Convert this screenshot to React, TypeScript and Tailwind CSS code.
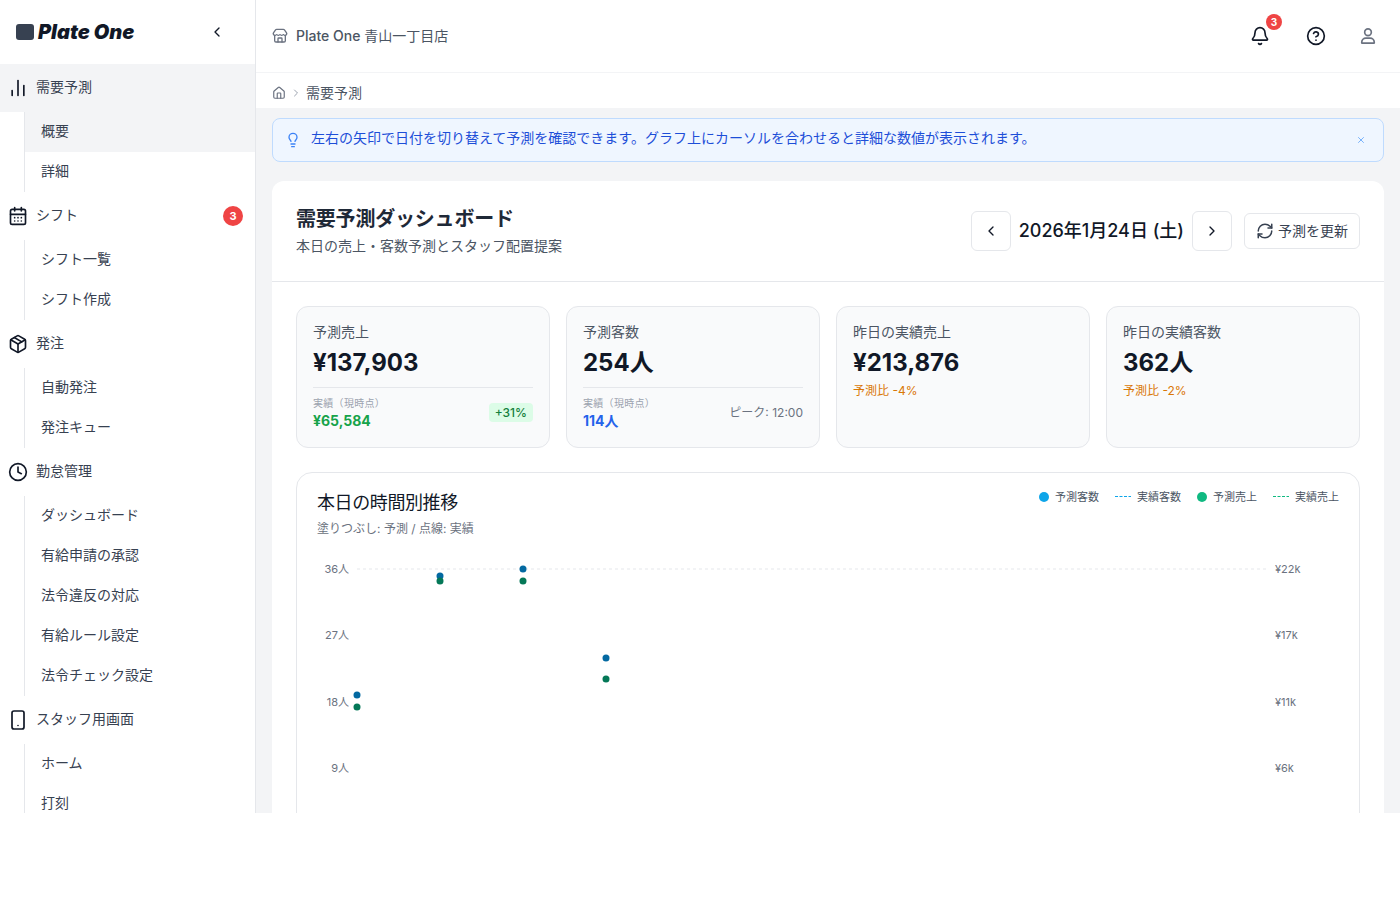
import {
  Bell,
  CalendarDays,
  ChartNoAxesColumn,
  ChevronLeft,
  ChevronRight,
  CircleHelp,
  Clock,
  House,
  Lightbulb,
  Package,
  RefreshCw,
  Store,
  X,
} from "lucide-react";

const font = "font-['Inter','Noto_Sans_CJK_JP',sans-serif]";

function NavHead({ icon, label, active, badge }: { icon: React.ReactNode; label: string; active?: boolean; badge?: string }) {
  return (
    <div className={`flex h-12 items-center pl-2 pr-3 ${active ? "bg-[#f3f4f6]" : ""}`}>
      <span className="flex w-5 shrink-0 justify-center text-[#111827]">{icon}</span>
      <span className="ml-2 flex-1 pb-0.5 text-sm text-[#374151]">{label}</span>
      {badge && (
        <span className="flex h-5 w-5 items-center justify-center rounded-full bg-[#ef4444] text-[11px] font-bold text-white">{badge}</span>
      )}
    </div>
  );
}

function NavSub({ items, active }: { items: string[]; active?: string }) {
  return (
    <div className="ml-6 border-l border-[#e5e7eb]">
      {items.map((item) => (
        <div key={item} className={`flex h-10 items-center pb-0.5 pl-4 text-sm text-[#374151] ${item === active ? "bg-[#f3f4f6]" : ""}`}>
          {item}
        </div>
      ))}
    </div>
  );
}

function TabletIcon() {
  return (
    <svg width="20" height="20" viewBox="0 0 20 20" fill="none" stroke="currentColor" strokeWidth="1.7">
      <rect x="4" y="1" width="12" height="18" rx="2" />
      <circle cx="10" cy="15.5" r="0.5" fill="currentColor" strokeWidth="0.6" />
    </svg>
  );
}

function UserIcon() {
  return (
    <svg width="20" height="20" viewBox="0 0 24 24" fill="none" stroke="currentColor" strokeWidth="2">
      <circle cx="12" cy="7.5" r="4" />
      <path d="M4.5 20.5v-1a5 5 0 0 1 5-5h5a5 5 0 0 1 5 5v1z" strokeLinejoin="round" />
    </svg>
  );
}

function Sidebar() {
  return (
    <aside className="w-64 shrink-0 border-r border-[#e5e7eb] bg-white">
      <div className="flex h-16 items-center justify-between pl-4 pr-[30px]">
        <div className="flex items-center gap-1">
          <span className="h-4 w-[18px] rounded-[3px] bg-[#374151]" />
          <span className="text-[20px] font-black italic text-[#111827]">Plate One</span>
        </div>
        <ChevronLeft size={16} className="text-[#111827]" />
      </div>
      <NavHead icon={<ChartNoAxesColumn size={20} />} label="需要予測" active />
      <NavSub items={["概要", "詳細"]} active="概要" />
      <NavHead icon={<CalendarDays size={20} />} label="シフト" badge="3" />
      <NavSub items={["シフト一覧", "シフト作成"]} />
      <NavHead icon={<Package size={20} />} label="発注" />
      <NavSub items={["自動発注", "発注キュー"]} />
      <NavHead icon={<Clock size={20} />} label="勤怠管理" />
      <NavSub items={["ダッシュボード", "有給申請の承認", "法令違反の対応", "有給ルール設定", "法令チェック設定"]} />
      <NavHead icon={<TabletIcon />} label="スタッフ用画面" />
      <NavSub items={["ホーム", "打刻"]} />
    </aside>
  );
}

function Topbar() {
  return (
    <>
      <header className="flex h-[73px] shrink-0 items-center justify-between border-b border-[#f3f4f6] bg-white pl-4 pr-[22px]">
        <div className="flex items-center gap-2 text-sm text-[#4b5563]">
          <Store size={16} className="text-[#6b7280]" />
          <span className="font-medium">
            Plate One <span className="font-normal">青山一丁目店</span>
          </span>
        </div>
        <div className="flex items-center">
          <div className="relative text-[#111827]">
            <Bell size={20} />
            <span className="absolute -right-3 -top-3 flex h-4 w-4 items-center justify-center rounded-full bg-[#ef4444] text-[10px] font-bold text-white">3</span>
          </div>
          <CircleHelp size={20} className="ml-9 text-[#111827]" />
          <span className="ml-8 text-[#6b7280]">
            <UserIcon />
          </span>
        </div>
      </header>
      <div className="flex h-[35px] shrink-0 items-center gap-1 bg-white pl-4 pt-[5px] text-sm text-[#4b5563]">
        <House size={14} className="text-[#6b7280]" />
        <ChevronRight size={12} className="text-[#9ca3af]" />
        <span>需要予測</span>
      </div>
    </>
  );
}

function StatCard({ label, value, children }: { label: string; value: string; children: React.ReactNode }) {
  return (
    <div className="h-[142px] rounded-xl border border-[#e5e7eb] bg-[#f9fafb] px-4 pt-4">
      <div className="text-sm leading-[18px] text-[#4b5563]">{label}</div>
      <div className="mt-1.5 text-2xl leading-8 font-bold text-[#111827]">{value}</div>
      {children}
    </div>
  );
}

function Actual({ value, color, right }: { value: string; color: string; right: React.ReactNode }) {
  return (
    <div className="mt-2 flex items-center justify-between border-t border-[#e5e7eb] pt-2">
      <div>
        <div className="text-[10px] leading-[14px] tracking-[0.3px] text-[#9ca3af]">実績（現時点）</div>
        <div className={`mt-px text-sm leading-5 font-bold ${color}`}>{value}</div>
      </div>
      <div className="pb-1.5">{right}</div>
    </div>
  );
}

function Chart() {
  const grid = [
    { y: 33, left: "36人", right: "¥22k" },
    { y: 99, left: "27人", right: "¥17k" },
    { y: 166, left: "18人", right: "¥11k" },
    { y: 232, left: "9人", right: "¥6k" },
  ];
  const blue = [
    [60, 159],
    [143, 40],
    [226, 33],
    [309, 122],
  ];
  const green = [
    [60, 171],
    [143, 45],
    [226, 45],
    [309, 143],
  ];
  return (
    <svg width="1062" height="270" className="-mt-[3px] block">
      <line x1="60" x2="970" y1="33" y2="33" stroke="#e5e7eb" strokeDasharray="3 3" />
      {grid.map((g) => (
        <g key={g.y} fontSize="11" fill="#6b7280">
          <text x="52" y={g.y + 4} textAnchor="end">{g.left}</text>
          <text x="978" y={g.y + 4}>{g.right}</text>
        </g>
      ))}
      {blue.map(([x, y]) => (
        <circle key={x} cx={x} cy={y} r="3.5" fill="#0369a1" />
      ))}
      {green.map(([x, y]) => (
        <circle key={x} cx={x} cy={y} r="3.5" fill="#047857" />
      ))}
    </svg>
  );
}

function DashMark({ color }: { color: string }) {
  return (
    <svg width="16" height="2">
      <line x1="0" x2="16" y1="0.5" y2="0.5" stroke={color} strokeWidth="1" strokeDasharray="3 1.5" />
    </svg>
  );
}

function Legend() {
  return (
    <div className="-mt-px flex items-center gap-4 text-[11px] text-[#4b5563]">
      <span className="flex items-center gap-[6px]"><i className="h-2.5 w-2.5 rounded-full bg-[#0ea5e9]" />予測客数</span>
      <span className="flex items-center gap-[6px]"><DashMark color="#0ea5e9" />実績客数</span>
      <span className="flex items-center gap-[6px]"><i className="h-2.5 w-2.5 rounded-full bg-[#10b981]" />予測売上</span>
      <span className="flex items-center gap-[6px]"><DashMark color="#10b981" />実績売上</span>
    </div>
  );
}

export default function App() {
  return (
    <div className={`flex h-[813px] overflow-hidden bg-white ${font}`}>
      <Sidebar />
      <div className="flex min-w-0 flex-1 flex-col">
        <Topbar />
        <main className="flex-1 overflow-hidden bg-[#f3f4f6] px-4 pt-2.5">
          <div className="flex h-11 items-center rounded-lg border border-[#bfdbfe] bg-[#eff6ff] pl-3 pr-[17px]">
            <Lightbulb size={16} className="text-[#3b82f6]" />
            <span className="ml-2.5 flex-1 pb-[5px] text-sm text-[#1d4ed8]">
              左右の矢印で日付を切り替えて予測を確認できます。グラフ上にカーソルを合わせると詳細な数値が表示されます。
            </span>
            <X size={10} className="text-[#60a5fa]" />
          </div>

          <div className="mt-[19px] h-[700px] rounded-xl bg-white">
            <div className="flex h-[101px] items-center justify-between border-b border-[#e5e7eb] px-6">
              <div className="pb-0.5">
                <h1 className="text-xl leading-7 font-bold tracking-[-0.2px] text-[#1f2937]">需要予測ダッシュボード</h1>
                <p className="mt-[3px] text-sm leading-5 text-[#4b5563]">本日の売上・客数予測とスタッフ配置提案</p>
              </div>
              <div className="flex items-center">
                <button className="flex h-10 w-10 items-center justify-center rounded-md border border-[#e5e7eb] bg-white text-[#111827]">
                  <ChevronLeft size={16} />
                </button>
                <span className="mx-2 text-lg font-medium text-[#111827]">2026年1月24日 (土)</span>
                <button className="flex h-10 w-10 items-center justify-center rounded-md border border-[#e5e7eb] bg-white text-[#111827]">
                  <ChevronRight size={16} />
                </button>
                <button className="ml-3 flex h-9 w-[116px] items-center justify-center gap-1 rounded-md border border-[#e5e7eb] bg-white text-sm text-[#374151]">
                  <RefreshCw size={18} />
                  予測を更新
                </button>
              </div>
            </div>

            <div className="px-6 pt-6">
              <div className="grid grid-cols-4 gap-4">
                <StatCard label="予測売上" value="¥137,903">
                  <Actual
                    value="¥65,584"
                    color="text-[#16a34a]"
                    right={<span className="rounded bg-[#dcfce7] px-1.5 py-0.5 text-xs font-medium text-[#15803d]">+31%</span>}
                  />
                </StatCard>
                <StatCard label="予測客数" value="254人">
                  <Actual value="114人" color="text-[#2563eb]" right={<span className="text-xs text-[#6b7280]">ピーク: 12:00</span>} />
                </StatCard>
                <StatCard label="昨日の実績売上" value="¥213,876">
                  <div className="mt-1 text-xs leading-4 text-[#d97706]">予測比 -4%</div>
                </StatCard>
                <StatCard label="昨日の実績客数" value="362人">
                  <div className="mt-1 text-xs leading-4 text-[#d97706]">予測比 -2%</div>
                </StatCard>
              </div>

              <div className="mt-6 h-[400px] rounded-2xl border border-[#e5e7eb] bg-white">
                <div className="flex items-start justify-between pl-5 pr-5 pt-[17px]">
                  <div>
                    <h2 className="pt-px text-lg leading-6 font-normal tracking-[-0.4px] text-[#111827]">本日の時間別推移</h2>
                    <p className="mt-1 text-xs leading-5 text-[#6b7280]">塗りつぶし: 予測 / 点線: 実績</p>
                  </div>
                  <Legend />
                </div>
                <Chart />
              </div>
            </div>
          </div>
        </main>
      </div>
    </div>
  );
}
